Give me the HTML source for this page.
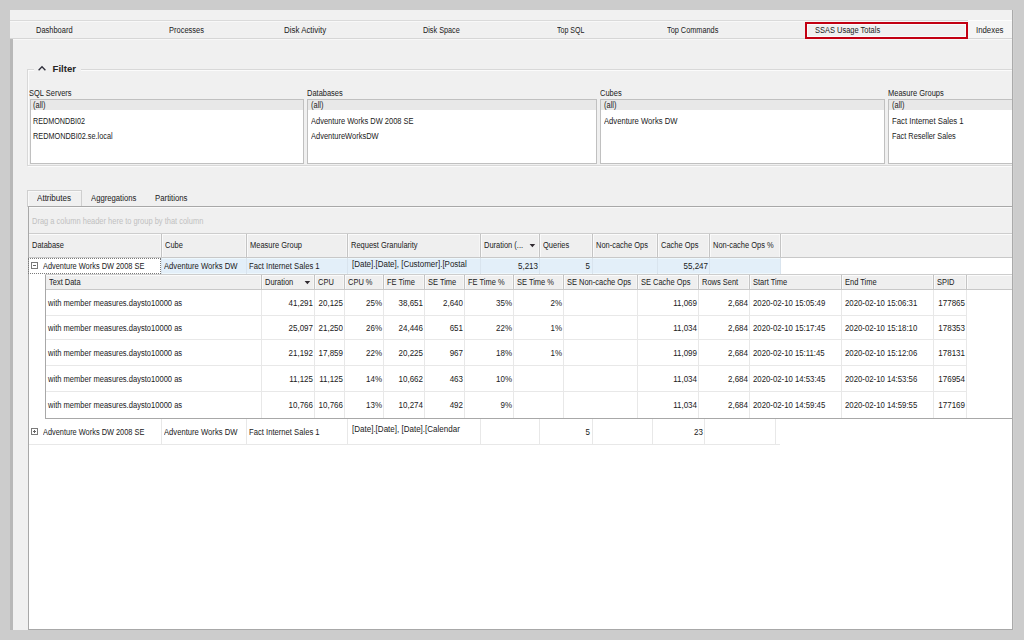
<!DOCTYPE html>
<html><head><meta charset="utf-8"><style>
html,body{margin:0;padding:0}
body{width:1024px;height:640px;overflow:hidden;position:relative;background:#cccccc;font-family:"Liberation Sans",sans-serif}
body>div,body>svg{position:absolute}
.t{white-space:nowrap}
</style></head><body>
<div style="left:10px;top:10px;width:1002px;height:620px;background:#f0f0f0"></div>
<div style="left:10px;top:38px;width:3px;height:592px;background:#b8b8b8"></div>
<div style="left:10px;top:10px;width:1002px;height:10px;background:#f1f1f1"></div>
<div style="left:10px;top:20px;width:1002px;height:1px;background:#dadada"></div>
<div style="left:10px;top:21px;width:1002px;height:1px;background:#f8f8f8"></div>
<div style="left:10px;top:38px;width:1002px;height:1px;background:#d6d6d6"></div>
<div style="left:13px;top:39px;width:999px;height:1px;background:#f8f8f8"></div>
<div style="left:968px;top:20px;width:44px;height:18px;background:#f5f5f5;border-top:1px solid #fdfdfd;box-sizing:border-box"></div>
<div class="t" style="left:35.5px;transform-origin:0 50%;transform:scaleX(0.88);top:24.05px;line-height:12px;font-size:8.5px;font-weight:normal;color:#1a1a1a;">Dashboard</div>
<div class="t" style="left:169.3px;transform-origin:0 50%;transform:scaleX(0.88);top:24.05px;line-height:12px;font-size:8.5px;font-weight:normal;color:#1a1a1a;">Processes</div>
<div class="t" style="left:284.3px;transform-origin:0 50%;transform:scaleX(0.93);top:24.05px;line-height:12px;font-size:8.5px;font-weight:normal;color:#1a1a1a;">Disk Activity</div>
<div class="t" style="left:422.8px;transform-origin:0 50%;transform:scaleX(0.856);top:24.05px;line-height:12px;font-size:8.5px;font-weight:normal;color:#1a1a1a;">Disk Space</div>
<div class="t" style="left:556.6px;transform-origin:0 50%;transform:scaleX(0.83);top:24.05px;line-height:12px;font-size:8.5px;font-weight:normal;color:#1a1a1a;">Top SQL</div>
<div class="t" style="left:666.6px;transform-origin:0 50%;transform:scaleX(0.863);top:24.05px;line-height:12px;font-size:8.5px;font-weight:normal;color:#1a1a1a;">Top Commands</div>
<div class="t" style="left:815px;transform-origin:0 50%;transform:scaleX(0.88);top:24.05px;line-height:12px;font-size:8.5px;font-weight:normal;color:#1a1a1a;">SSAS Usage Totals</div>
<div class="t" style="left:975.5px;transform-origin:0 50%;transform:scaleX(0.92);top:24.05px;line-height:12px;font-size:8.5px;font-weight:normal;color:#1a1a1a;">Indexes</div>
<div style="left:805px;top:22px;width:163px;height:17px;border:2px solid #c20012;box-sizing:border-box;box-shadow:inset 0 0 0 1px #fbfbfb"></div>
<div style="left:27px;top:69px;width:7px;height:1px;background:#d8d8d8"></div>
<div style="left:28px;top:70px;width:6px;height:1px;background:#fbfbfb"></div>
<div style="left:81px;top:69px;width:931px;height:1px;background:#d8d8d8"></div>
<div style="left:81px;top:70px;width:931px;height:1px;background:#fbfbfb"></div>
<div style="left:27px;top:69px;width:1px;height:97px;background:#d8d8d8"></div>
<div style="left:28px;top:70px;width:1px;height:95px;background:#fbfbfb"></div>
<div style="left:27px;top:165px;width:985px;height:1px;background:#d8d8d8"></div>
<div style="left:28px;top:166px;width:984px;height:1px;background:#fbfbfb"></div>
<svg style="left:37px;top:64px;width:10px;height:8px" viewBox="0 0 10 8"><path d="M1.6 6.3 L5 2.7 L8.4 6.3" fill="none" stroke="#2e2e3a" stroke-width="1.3"/></svg>
<div class="t" style="left:52.6px;transform-origin:0 50%;top:62.87px;line-height:12px;font-size:9.6px;font-weight:bold;color:#262626;">Filter</div>
<div class="t" style="left:29px;transform-origin:0 50%;transform:scaleX(0.88);top:87.05px;line-height:12px;font-size:8.5px;font-weight:normal;color:#1a1a1a;">SQL Servers</div>
<div style="left:30px;top:99px;width:274px;height:65px;background:#fff;border:1px solid #c0c0c0;box-sizing:border-box"></div>
<div style="left:31px;top:100px;width:272px;height:10px;background:#e8e8e8"></div>
<div class="t" style="left:33px;transform-origin:0 50%;transform:scaleX(0.88);top:98.65px;line-height:12px;font-size:8.5px;font-weight:normal;color:#1a1a1a;">(all)</div>
<div class="t" style="left:33px;transform-origin:0 50%;transform:scaleX(0.847);top:115.05px;line-height:12px;font-size:8.5px;font-weight:normal;color:#1a1a1a;">REDMONDBI02</div>
<div class="t" style="left:33px;transform-origin:0 50%;transform:scaleX(0.86);top:129.55px;line-height:12px;font-size:8.5px;font-weight:normal;color:#1a1a1a;">REDMONDBI02.se.local</div>
<div class="t" style="left:306.5px;transform-origin:0 50%;transform:scaleX(0.88);top:87.05px;line-height:12px;font-size:8.5px;font-weight:normal;color:#1a1a1a;">Databases</div>
<div style="left:307px;top:99px;width:290px;height:65px;background:#fff;border:1px solid #c0c0c0;box-sizing:border-box"></div>
<div style="left:308px;top:100px;width:288px;height:10px;background:#e8e8e8"></div>
<div class="t" style="left:310.5px;transform-origin:0 50%;transform:scaleX(0.88);top:98.65px;line-height:12px;font-size:8.5px;font-weight:normal;color:#1a1a1a;">(all)</div>
<div class="t" style="left:310.5px;transform-origin:0 50%;transform:scaleX(0.88);top:115.05px;line-height:12px;font-size:8.5px;font-weight:normal;color:#1a1a1a;">Adventure Works DW 2008 SE</div>
<div class="t" style="left:310.5px;transform-origin:0 50%;transform:scaleX(0.88);top:129.55px;line-height:12px;font-size:8.5px;font-weight:normal;color:#1a1a1a;">AdventureWorksDW</div>
<div class="t" style="left:599.5px;transform-origin:0 50%;transform:scaleX(0.88);top:87.05px;line-height:12px;font-size:8.5px;font-weight:normal;color:#1a1a1a;">Cubes</div>
<div style="left:600px;top:99px;width:285px;height:65px;background:#fff;border:1px solid #c0c0c0;box-sizing:border-box"></div>
<div style="left:601px;top:100px;width:283px;height:10px;background:#e8e8e8"></div>
<div class="t" style="left:603.5px;transform-origin:0 50%;transform:scaleX(0.88);top:98.65px;line-height:12px;font-size:8.5px;font-weight:normal;color:#1a1a1a;">(all)</div>
<div class="t" style="left:603.5px;transform-origin:0 50%;transform:scaleX(0.9);top:115.05px;line-height:12px;font-size:8.5px;font-weight:normal;color:#1a1a1a;">Adventure Works DW</div>
<div class="t" style="left:887.5px;transform-origin:0 50%;transform:scaleX(0.88);top:87.05px;line-height:12px;font-size:8.5px;font-weight:normal;color:#1a1a1a;">Measure Groups</div>
<div style="left:888px;top:99px;width:125px;height:65px;background:#fff;border:1px solid #c0c0c0;box-sizing:border-box"></div>
<div style="left:889px;top:100px;width:123px;height:10px;background:#e8e8e8"></div>
<div class="t" style="left:891.5px;transform-origin:0 50%;transform:scaleX(0.88);top:98.65px;line-height:12px;font-size:8.5px;font-weight:normal;color:#1a1a1a;">(all)</div>
<div class="t" style="left:891.5px;transform-origin:0 50%;transform:scaleX(0.913);top:115.05px;line-height:12px;font-size:8.5px;font-weight:normal;color:#1a1a1a;">Fact Internet Sales 1</div>
<div class="t" style="left:891.5px;transform-origin:0 50%;transform:scaleX(0.865);top:129.55px;line-height:12px;font-size:8.5px;font-weight:normal;color:#1a1a1a;">Fact Reseller Sales</div>
<div style="left:27px;top:190px;width:55px;height:17px;background:#f0f0f0;border:1px solid #cfcfcf;border-bottom:none;box-sizing:border-box;box-shadow:inset 1px 1px 0 #f8f8f8"></div>
<div class="t" style="left:37.3px;transform-origin:0 50%;transform:scaleX(0.95);top:192.05px;line-height:12px;font-size:8.5px;font-weight:normal;color:#1a1a1a;">Attributes</div>
<div class="t" style="left:90.5px;transform-origin:0 50%;transform:scaleX(0.905);top:192.05px;line-height:12px;font-size:8.5px;font-weight:normal;color:#1a1a1a;">Aggregations</div>
<div class="t" style="left:154.8px;transform-origin:0 50%;transform:scaleX(0.917);top:192.05px;line-height:12px;font-size:8.5px;font-weight:normal;color:#1a1a1a;">Partitions</div>
<div style="left:28px;top:206px;width:985px;height:424px;background:#fff;border:1px solid #a8a8a8;box-sizing:border-box"></div>
<div style="left:29px;top:207px;width:983px;height:26px;background:#f0f0f0;border-top:1px solid #fafafa;box-sizing:border-box"></div>
<div class="t" style="left:32px;transform-origin:0 50%;transform:scaleX(0.88);top:214.75px;line-height:12px;font-size:8.5px;font-weight:normal;color:#c0c0c0;">Drag a column header here to group by that column</div>
<div style="left:29px;top:233px;width:983px;height:1px;background:#cdcdcd"></div>
<div style="left:29px;top:234px;width:983px;height:23px;background:#efefef"></div>
<div style="left:29px;top:257px;width:983px;height:1px;background:#c8c8c8"></div>
<div style="left:29px;top:234px;width:983px;height:1px;background:#fbfbfb"></div>
<div style="left:160px;top:235px;width:1px;height:22px;background:#f6f6f6"></div>
<div style="left:161px;top:234px;width:1px;height:23px;background:#c4c4c4"></div>
<div style="left:162px;top:235px;width:1px;height:22px;background:#fafafa"></div>
<div style="left:245px;top:235px;width:1px;height:22px;background:#f6f6f6"></div>
<div style="left:246px;top:234px;width:1px;height:23px;background:#c4c4c4"></div>
<div style="left:247px;top:235px;width:1px;height:22px;background:#fafafa"></div>
<div style="left:346px;top:235px;width:1px;height:22px;background:#f6f6f6"></div>
<div style="left:347px;top:234px;width:1px;height:23px;background:#c4c4c4"></div>
<div style="left:348px;top:235px;width:1px;height:22px;background:#fafafa"></div>
<div style="left:479px;top:235px;width:1px;height:22px;background:#f6f6f6"></div>
<div style="left:480px;top:234px;width:1px;height:23px;background:#c4c4c4"></div>
<div style="left:481px;top:235px;width:1px;height:22px;background:#fafafa"></div>
<div style="left:538px;top:235px;width:1px;height:22px;background:#f6f6f6"></div>
<div style="left:539px;top:234px;width:1px;height:23px;background:#c4c4c4"></div>
<div style="left:540px;top:235px;width:1px;height:22px;background:#fafafa"></div>
<div style="left:591px;top:235px;width:1px;height:22px;background:#f6f6f6"></div>
<div style="left:592px;top:234px;width:1px;height:23px;background:#c4c4c4"></div>
<div style="left:593px;top:235px;width:1px;height:22px;background:#fafafa"></div>
<div style="left:656px;top:235px;width:1px;height:22px;background:#f6f6f6"></div>
<div style="left:657px;top:234px;width:1px;height:23px;background:#c4c4c4"></div>
<div style="left:658px;top:235px;width:1px;height:22px;background:#fafafa"></div>
<div style="left:708px;top:235px;width:1px;height:22px;background:#f6f6f6"></div>
<div style="left:709px;top:234px;width:1px;height:23px;background:#c4c4c4"></div>
<div style="left:710px;top:235px;width:1px;height:22px;background:#fafafa"></div>
<div style="left:779px;top:235px;width:1px;height:22px;background:#f6f6f6"></div>
<div style="left:780px;top:234px;width:1px;height:23px;background:#c4c4c4"></div>
<div style="left:781px;top:235px;width:1px;height:22px;background:#fafafa"></div>
<div class="t" style="left:32px;transform-origin:0 50%;transform:scaleX(0.88);top:238.55px;line-height:12px;font-size:8.5px;font-weight:normal;color:#1a1a1a;">Database</div>
<div class="t" style="left:165px;transform-origin:0 50%;transform:scaleX(0.88);top:238.55px;line-height:12px;font-size:8.5px;font-weight:normal;color:#1a1a1a;">Cube</div>
<div class="t" style="left:250px;transform-origin:0 50%;transform:scaleX(0.88);top:238.55px;line-height:12px;font-size:8.5px;font-weight:normal;color:#1a1a1a;">Measure Group</div>
<div class="t" style="left:351px;transform-origin:0 50%;transform:scaleX(0.88);top:238.55px;line-height:12px;font-size:8.5px;font-weight:normal;color:#1a1a1a;">Request Granularity</div>
<div class="t" style="left:484px;transform-origin:0 50%;transform:scaleX(0.88);top:238.55px;line-height:12px;font-size:8.5px;font-weight:normal;color:#1a1a1a;">Duration (...</div>
<div class="t" style="left:543px;transform-origin:0 50%;transform:scaleX(0.88);top:238.55px;line-height:12px;font-size:8.5px;font-weight:normal;color:#1a1a1a;">Queries</div>
<div class="t" style="left:596px;transform-origin:0 50%;transform:scaleX(0.88);top:238.55px;line-height:12px;font-size:8.5px;font-weight:normal;color:#1a1a1a;">Non-cache Ops</div>
<div class="t" style="left:661px;transform-origin:0 50%;transform:scaleX(0.88);top:238.55px;line-height:12px;font-size:8.5px;font-weight:normal;color:#1a1a1a;">Cache Ops</div>
<div class="t" style="left:713px;transform-origin:0 50%;transform:scaleX(0.88);top:238.55px;line-height:12px;font-size:8.5px;font-weight:normal;color:#1a1a1a;">Non-cache Ops %</div>
<svg style="left:529px;top:243px;width:8px;height:6px" viewBox="0 0 8 6"><path d="M0.6 1 L6.2 1 L3.4 4.3 Z" fill="#302a30"/></svg>
<div style="left:161px;top:258px;width:619px;height:16px;background:#e3eff9;box-shadow:inset 0 1px 0 #eef8fd, inset 0 -1px 0 #eef8fd"></div>
<div style="left:161px;top:258px;width:1px;height:16px;background:#d9e4ee"></div>
<div style="left:246px;top:258px;width:1px;height:16px;background:#d9e4ee"></div>
<div style="left:347px;top:258px;width:1px;height:16px;background:#d9e4ee"></div>
<div style="left:480px;top:258px;width:1px;height:16px;background:#d9e4ee"></div>
<div style="left:539px;top:258px;width:1px;height:16px;background:#d9e4ee"></div>
<div style="left:592px;top:258px;width:1px;height:16px;background:#d9e4ee"></div>
<div style="left:657px;top:258px;width:1px;height:16px;background:#d9e4ee"></div>
<div style="left:709px;top:258px;width:1px;height:16px;background:#d9e4ee"></div>
<div style="left:780px;top:258px;width:1px;height:16px;background:#d9e4ee"></div>
<div style="left:28px;top:258px;width:133px;height:16px;border:1px dotted #7a7a7a;box-sizing:border-box"></div>
<svg style="left:31px;top:262px;width:7px;height:7px" viewBox="0 0 7 7"><rect x="0.5" y="0.5" width="6" height="6" fill="#fff" stroke="#7a7a7a" stroke-width="1"/><path d="M2 3.5 H5" stroke="#666" stroke-width="1"/></svg>
<div class="t" style="left:42.5px;transform-origin:0 50%;transform:scaleX(0.87);top:259.65px;line-height:12px;font-size:8.5px;font-weight:normal;color:#1a1a1a;">Adventure Works DW 2008 SE</div>
<div class="t" style="left:164px;transform-origin:0 50%;transform:scaleX(0.9);top:259.65px;line-height:12px;font-size:8.5px;font-weight:normal;color:#1a1a1a;">Adventure Works DW</div>
<div class="t" style="left:249.3px;transform-origin:0 50%;transform:scaleX(0.9);top:259.65px;line-height:12px;font-size:8.5px;font-weight:normal;color:#1a1a1a;">Fact Internet Sales 1</div>
<div class="t" style="left:351.5px;transform-origin:0 50%;transform:scaleX(0.938);top:258.15px;line-height:12px;font-size:8.5px;font-weight:normal;color:#1a1a1a;">[Date].[Date], [Customer].[Postal</div>
<div class="t" style="left:237.5px;width:300px;text-align:right;transform-origin:100% 50%;transform:scaleX(0.94);top:259.65px;line-height:12px;font-size:8.5px;font-weight:normal;color:#1a1a1a;">5,213</div>
<div class="t" style="left:290px;width:300px;text-align:right;transform-origin:100% 50%;transform:scaleX(0.94);top:259.65px;line-height:12px;font-size:8.5px;font-weight:normal;color:#1a1a1a;">5</div>
<div class="t" style="left:407.5px;width:300px;text-align:right;transform-origin:100% 50%;transform:scaleX(0.94);top:259.65px;line-height:12px;font-size:8.5px;font-weight:normal;color:#1a1a1a;">55,247</div>
<div style="left:45px;top:274px;width:1px;height:145px;background:#a8a8a8"></div>
<div style="left:45px;top:274px;width:967px;height:1px;background:#cdcdcd"></div>
<div style="left:46px;top:275px;width:966px;height:14px;background:#efefef"></div>
<div style="left:46px;top:289px;width:966px;height:1px;background:#c8c8c8"></div>
<div style="left:46px;top:275px;width:966px;height:1px;background:#fbfbfb"></div>
<div style="left:260px;top:276px;width:1px;height:13px;background:#f6f6f6"></div>
<div style="left:261px;top:275px;width:1px;height:14px;background:#c4c4c4"></div>
<div style="left:262px;top:276px;width:1px;height:13px;background:#fafafa"></div>
<div style="left:313px;top:276px;width:1px;height:13px;background:#f6f6f6"></div>
<div style="left:314px;top:275px;width:1px;height:14px;background:#c4c4c4"></div>
<div style="left:315px;top:276px;width:1px;height:13px;background:#fafafa"></div>
<div style="left:343px;top:276px;width:1px;height:13px;background:#f6f6f6"></div>
<div style="left:344px;top:275px;width:1px;height:14px;background:#c4c4c4"></div>
<div style="left:345px;top:276px;width:1px;height:13px;background:#fafafa"></div>
<div style="left:382px;top:276px;width:1px;height:13px;background:#f6f6f6"></div>
<div style="left:383px;top:275px;width:1px;height:14px;background:#c4c4c4"></div>
<div style="left:384px;top:276px;width:1px;height:13px;background:#fafafa"></div>
<div style="left:423px;top:276px;width:1px;height:13px;background:#f6f6f6"></div>
<div style="left:424px;top:275px;width:1px;height:14px;background:#c4c4c4"></div>
<div style="left:425px;top:276px;width:1px;height:13px;background:#fafafa"></div>
<div style="left:463px;top:276px;width:1px;height:13px;background:#f6f6f6"></div>
<div style="left:464px;top:275px;width:1px;height:14px;background:#c4c4c4"></div>
<div style="left:465px;top:276px;width:1px;height:13px;background:#fafafa"></div>
<div style="left:512px;top:276px;width:1px;height:13px;background:#f6f6f6"></div>
<div style="left:513px;top:275px;width:1px;height:14px;background:#c4c4c4"></div>
<div style="left:514px;top:276px;width:1px;height:13px;background:#fafafa"></div>
<div style="left:562px;top:276px;width:1px;height:13px;background:#f6f6f6"></div>
<div style="left:563px;top:275px;width:1px;height:14px;background:#c4c4c4"></div>
<div style="left:564px;top:276px;width:1px;height:13px;background:#fafafa"></div>
<div style="left:636px;top:276px;width:1px;height:13px;background:#f6f6f6"></div>
<div style="left:637px;top:275px;width:1px;height:14px;background:#c4c4c4"></div>
<div style="left:638px;top:276px;width:1px;height:13px;background:#fafafa"></div>
<div style="left:697px;top:276px;width:1px;height:13px;background:#f6f6f6"></div>
<div style="left:698px;top:275px;width:1px;height:14px;background:#c4c4c4"></div>
<div style="left:699px;top:276px;width:1px;height:13px;background:#fafafa"></div>
<div style="left:748px;top:276px;width:1px;height:13px;background:#f6f6f6"></div>
<div style="left:749px;top:275px;width:1px;height:14px;background:#c4c4c4"></div>
<div style="left:750px;top:276px;width:1px;height:13px;background:#fafafa"></div>
<div style="left:840px;top:276px;width:1px;height:13px;background:#f6f6f6"></div>
<div style="left:841px;top:275px;width:1px;height:14px;background:#c4c4c4"></div>
<div style="left:842px;top:276px;width:1px;height:13px;background:#fafafa"></div>
<div style="left:932px;top:276px;width:1px;height:13px;background:#f6f6f6"></div>
<div style="left:933px;top:275px;width:1px;height:14px;background:#c4c4c4"></div>
<div style="left:934px;top:276px;width:1px;height:13px;background:#fafafa"></div>
<div style="left:965px;top:276px;width:1px;height:13px;background:#f6f6f6"></div>
<div style="left:966px;top:275px;width:1px;height:14px;background:#c4c4c4"></div>
<div style="left:967px;top:276px;width:1px;height:13px;background:#fafafa"></div>
<div class="t" style="left:49px;transform-origin:0 50%;transform:scaleX(0.88);top:275.65px;line-height:12px;font-size:8.5px;font-weight:normal;color:#1a1a1a;">Text Data</div>
<div class="t" style="left:265px;transform-origin:0 50%;transform:scaleX(0.88);top:275.65px;line-height:12px;font-size:8.5px;font-weight:normal;color:#1a1a1a;">Duration</div>
<div class="t" style="left:318px;transform-origin:0 50%;transform:scaleX(0.88);top:275.65px;line-height:12px;font-size:8.5px;font-weight:normal;color:#1a1a1a;">CPU</div>
<div class="t" style="left:348px;transform-origin:0 50%;transform:scaleX(0.88);top:275.65px;line-height:12px;font-size:8.5px;font-weight:normal;color:#1a1a1a;">CPU %</div>
<div class="t" style="left:387px;transform-origin:0 50%;transform:scaleX(0.88);top:275.65px;line-height:12px;font-size:8.5px;font-weight:normal;color:#1a1a1a;">FE Time</div>
<div class="t" style="left:428px;transform-origin:0 50%;transform:scaleX(0.88);top:275.65px;line-height:12px;font-size:8.5px;font-weight:normal;color:#1a1a1a;">SE Time</div>
<div class="t" style="left:468px;transform-origin:0 50%;transform:scaleX(0.88);top:275.65px;line-height:12px;font-size:8.5px;font-weight:normal;color:#1a1a1a;">FE Time %</div>
<div class="t" style="left:517px;transform-origin:0 50%;transform:scaleX(0.88);top:275.65px;line-height:12px;font-size:8.5px;font-weight:normal;color:#1a1a1a;">SE Time %</div>
<div class="t" style="left:567px;transform-origin:0 50%;transform:scaleX(0.88);top:275.65px;line-height:12px;font-size:8.5px;font-weight:normal;color:#1a1a1a;">SE Non-cache Ops</div>
<div class="t" style="left:641px;transform-origin:0 50%;transform:scaleX(0.88);top:275.65px;line-height:12px;font-size:8.5px;font-weight:normal;color:#1a1a1a;">SE Cache Ops</div>
<div class="t" style="left:702px;transform-origin:0 50%;transform:scaleX(0.88);top:275.65px;line-height:12px;font-size:8.5px;font-weight:normal;color:#1a1a1a;">Rows Sent</div>
<div class="t" style="left:753px;transform-origin:0 50%;transform:scaleX(0.88);top:275.65px;line-height:12px;font-size:8.5px;font-weight:normal;color:#1a1a1a;">Start Time</div>
<div class="t" style="left:845px;transform-origin:0 50%;transform:scaleX(0.88);top:275.65px;line-height:12px;font-size:8.5px;font-weight:normal;color:#1a1a1a;">End Time</div>
<div class="t" style="left:937px;transform-origin:0 50%;transform:scaleX(0.88);top:275.65px;line-height:12px;font-size:8.5px;font-weight:normal;color:#1a1a1a;">SPID</div>
<svg style="left:304px;top:280px;width:8px;height:6px" viewBox="0 0 8 6"><path d="M0.6 1 L6.2 1 L3.4 4.3 Z" fill="#302a30"/></svg>
<div class="t" style="left:48px;transform-origin:0 50%;transform:scaleX(0.89);top:297.25px;line-height:12px;font-size:8.5px;font-weight:normal;color:#1a1a1a;">with member measures.daysto10000 as</div>
<div class="t" style="left:12.5px;width:300px;text-align:right;transform-origin:100% 50%;transform:scaleX(0.94);top:297.25px;line-height:12px;font-size:8.5px;font-weight:normal;color:#1a1a1a;">41,291</div>
<div class="t" style="left:42.5px;width:300px;text-align:right;transform-origin:100% 50%;transform:scaleX(0.94);top:297.25px;line-height:12px;font-size:8.5px;font-weight:normal;color:#1a1a1a;">20,125</div>
<div class="t" style="left:81.5px;width:300px;text-align:right;transform-origin:100% 50%;transform:scaleX(0.94);top:297.25px;line-height:12px;font-size:8.5px;font-weight:normal;color:#1a1a1a;">25%</div>
<div class="t" style="left:122.5px;width:300px;text-align:right;transform-origin:100% 50%;transform:scaleX(0.94);top:297.25px;line-height:12px;font-size:8.5px;font-weight:normal;color:#1a1a1a;">38,651</div>
<div class="t" style="left:162.5px;width:300px;text-align:right;transform-origin:100% 50%;transform:scaleX(0.94);top:297.25px;line-height:12px;font-size:8.5px;font-weight:normal;color:#1a1a1a;">2,640</div>
<div class="t" style="left:211.5px;width:300px;text-align:right;transform-origin:100% 50%;transform:scaleX(0.94);top:297.25px;line-height:12px;font-size:8.5px;font-weight:normal;color:#1a1a1a;">35%</div>
<div class="t" style="left:261.5px;width:300px;text-align:right;transform-origin:100% 50%;transform:scaleX(0.94);top:297.25px;line-height:12px;font-size:8.5px;font-weight:normal;color:#1a1a1a;">2%</div>
<div class="t" style="left:396.5px;width:300px;text-align:right;transform-origin:100% 50%;transform:scaleX(0.94);top:297.25px;line-height:12px;font-size:8.5px;font-weight:normal;color:#1a1a1a;">11,069</div>
<div class="t" style="left:447.5px;width:300px;text-align:right;transform-origin:100% 50%;transform:scaleX(0.94);top:297.25px;line-height:12px;font-size:8.5px;font-weight:normal;color:#1a1a1a;">2,684</div>
<div class="t" style="left:752.5px;transform-origin:0 50%;transform:scaleX(0.915);top:297.25px;line-height:12px;font-size:8.5px;font-weight:normal;color:#1a1a1a;">2020-02-10 15:05:49</div>
<div class="t" style="left:844.5px;transform-origin:0 50%;transform:scaleX(0.915);top:297.25px;line-height:12px;font-size:8.5px;font-weight:normal;color:#1a1a1a;">2020-02-10 15:06:31</div>
<div class="t" style="left:664.5px;width:300px;text-align:right;transform-origin:100% 50%;transform:scaleX(0.94);top:297.25px;line-height:12px;font-size:8.5px;font-weight:normal;color:#1a1a1a;">177865</div>
<div class="t" style="left:48px;transform-origin:0 50%;transform:scaleX(0.89);top:321.65px;line-height:12px;font-size:8.5px;font-weight:normal;color:#1a1a1a;">with member measures.daysto10000 as</div>
<div class="t" style="left:12.5px;width:300px;text-align:right;transform-origin:100% 50%;transform:scaleX(0.94);top:321.65px;line-height:12px;font-size:8.5px;font-weight:normal;color:#1a1a1a;">25,097</div>
<div class="t" style="left:42.5px;width:300px;text-align:right;transform-origin:100% 50%;transform:scaleX(0.94);top:321.65px;line-height:12px;font-size:8.5px;font-weight:normal;color:#1a1a1a;">21,250</div>
<div class="t" style="left:81.5px;width:300px;text-align:right;transform-origin:100% 50%;transform:scaleX(0.94);top:321.65px;line-height:12px;font-size:8.5px;font-weight:normal;color:#1a1a1a;">26%</div>
<div class="t" style="left:122.5px;width:300px;text-align:right;transform-origin:100% 50%;transform:scaleX(0.94);top:321.65px;line-height:12px;font-size:8.5px;font-weight:normal;color:#1a1a1a;">24,446</div>
<div class="t" style="left:162.5px;width:300px;text-align:right;transform-origin:100% 50%;transform:scaleX(0.94);top:321.65px;line-height:12px;font-size:8.5px;font-weight:normal;color:#1a1a1a;">651</div>
<div class="t" style="left:211.5px;width:300px;text-align:right;transform-origin:100% 50%;transform:scaleX(0.94);top:321.65px;line-height:12px;font-size:8.5px;font-weight:normal;color:#1a1a1a;">22%</div>
<div class="t" style="left:261.5px;width:300px;text-align:right;transform-origin:100% 50%;transform:scaleX(0.94);top:321.65px;line-height:12px;font-size:8.5px;font-weight:normal;color:#1a1a1a;">1%</div>
<div class="t" style="left:396.5px;width:300px;text-align:right;transform-origin:100% 50%;transform:scaleX(0.94);top:321.65px;line-height:12px;font-size:8.5px;font-weight:normal;color:#1a1a1a;">11,034</div>
<div class="t" style="left:447.5px;width:300px;text-align:right;transform-origin:100% 50%;transform:scaleX(0.94);top:321.65px;line-height:12px;font-size:8.5px;font-weight:normal;color:#1a1a1a;">2,684</div>
<div class="t" style="left:752.5px;transform-origin:0 50%;transform:scaleX(0.915);top:321.65px;line-height:12px;font-size:8.5px;font-weight:normal;color:#1a1a1a;">2020-02-10 15:17:45</div>
<div class="t" style="left:844.5px;transform-origin:0 50%;transform:scaleX(0.915);top:321.65px;line-height:12px;font-size:8.5px;font-weight:normal;color:#1a1a1a;">2020-02-10 15:18:10</div>
<div class="t" style="left:664.5px;width:300px;text-align:right;transform-origin:100% 50%;transform:scaleX(0.94);top:321.65px;line-height:12px;font-size:8.5px;font-weight:normal;color:#1a1a1a;">178353</div>
<div class="t" style="left:48px;transform-origin:0 50%;transform:scaleX(0.89);top:347.45px;line-height:12px;font-size:8.5px;font-weight:normal;color:#1a1a1a;">with member measures.daysto10000 as</div>
<div class="t" style="left:12.5px;width:300px;text-align:right;transform-origin:100% 50%;transform:scaleX(0.94);top:347.45px;line-height:12px;font-size:8.5px;font-weight:normal;color:#1a1a1a;">21,192</div>
<div class="t" style="left:42.5px;width:300px;text-align:right;transform-origin:100% 50%;transform:scaleX(0.94);top:347.45px;line-height:12px;font-size:8.5px;font-weight:normal;color:#1a1a1a;">17,859</div>
<div class="t" style="left:81.5px;width:300px;text-align:right;transform-origin:100% 50%;transform:scaleX(0.94);top:347.45px;line-height:12px;font-size:8.5px;font-weight:normal;color:#1a1a1a;">22%</div>
<div class="t" style="left:122.5px;width:300px;text-align:right;transform-origin:100% 50%;transform:scaleX(0.94);top:347.45px;line-height:12px;font-size:8.5px;font-weight:normal;color:#1a1a1a;">20,225</div>
<div class="t" style="left:162.5px;width:300px;text-align:right;transform-origin:100% 50%;transform:scaleX(0.94);top:347.45px;line-height:12px;font-size:8.5px;font-weight:normal;color:#1a1a1a;">967</div>
<div class="t" style="left:211.5px;width:300px;text-align:right;transform-origin:100% 50%;transform:scaleX(0.94);top:347.45px;line-height:12px;font-size:8.5px;font-weight:normal;color:#1a1a1a;">18%</div>
<div class="t" style="left:261.5px;width:300px;text-align:right;transform-origin:100% 50%;transform:scaleX(0.94);top:347.45px;line-height:12px;font-size:8.5px;font-weight:normal;color:#1a1a1a;">1%</div>
<div class="t" style="left:396.5px;width:300px;text-align:right;transform-origin:100% 50%;transform:scaleX(0.94);top:347.45px;line-height:12px;font-size:8.5px;font-weight:normal;color:#1a1a1a;">11,099</div>
<div class="t" style="left:447.5px;width:300px;text-align:right;transform-origin:100% 50%;transform:scaleX(0.94);top:347.45px;line-height:12px;font-size:8.5px;font-weight:normal;color:#1a1a1a;">2,684</div>
<div class="t" style="left:752.5px;transform-origin:0 50%;transform:scaleX(0.915);top:347.45px;line-height:12px;font-size:8.5px;font-weight:normal;color:#1a1a1a;">2020-02-10 15:11:45</div>
<div class="t" style="left:844.5px;transform-origin:0 50%;transform:scaleX(0.915);top:347.45px;line-height:12px;font-size:8.5px;font-weight:normal;color:#1a1a1a;">2020-02-10 15:12:06</div>
<div class="t" style="left:664.5px;width:300px;text-align:right;transform-origin:100% 50%;transform:scaleX(0.94);top:347.45px;line-height:12px;font-size:8.5px;font-weight:normal;color:#1a1a1a;">178131</div>
<div class="t" style="left:48px;transform-origin:0 50%;transform:scaleX(0.89);top:373.05px;line-height:12px;font-size:8.5px;font-weight:normal;color:#1a1a1a;">with member measures.daysto10000 as</div>
<div class="t" style="left:12.5px;width:300px;text-align:right;transform-origin:100% 50%;transform:scaleX(0.94);top:373.05px;line-height:12px;font-size:8.5px;font-weight:normal;color:#1a1a1a;">11,125</div>
<div class="t" style="left:42.5px;width:300px;text-align:right;transform-origin:100% 50%;transform:scaleX(0.94);top:373.05px;line-height:12px;font-size:8.5px;font-weight:normal;color:#1a1a1a;">11,125</div>
<div class="t" style="left:81.5px;width:300px;text-align:right;transform-origin:100% 50%;transform:scaleX(0.94);top:373.05px;line-height:12px;font-size:8.5px;font-weight:normal;color:#1a1a1a;">14%</div>
<div class="t" style="left:122.5px;width:300px;text-align:right;transform-origin:100% 50%;transform:scaleX(0.94);top:373.05px;line-height:12px;font-size:8.5px;font-weight:normal;color:#1a1a1a;">10,662</div>
<div class="t" style="left:162.5px;width:300px;text-align:right;transform-origin:100% 50%;transform:scaleX(0.94);top:373.05px;line-height:12px;font-size:8.5px;font-weight:normal;color:#1a1a1a;">463</div>
<div class="t" style="left:211.5px;width:300px;text-align:right;transform-origin:100% 50%;transform:scaleX(0.94);top:373.05px;line-height:12px;font-size:8.5px;font-weight:normal;color:#1a1a1a;">10%</div>
<div class="t" style="left:396.5px;width:300px;text-align:right;transform-origin:100% 50%;transform:scaleX(0.94);top:373.05px;line-height:12px;font-size:8.5px;font-weight:normal;color:#1a1a1a;">11,034</div>
<div class="t" style="left:447.5px;width:300px;text-align:right;transform-origin:100% 50%;transform:scaleX(0.94);top:373.05px;line-height:12px;font-size:8.5px;font-weight:normal;color:#1a1a1a;">2,684</div>
<div class="t" style="left:752.5px;transform-origin:0 50%;transform:scaleX(0.915);top:373.05px;line-height:12px;font-size:8.5px;font-weight:normal;color:#1a1a1a;">2020-02-10 14:53:45</div>
<div class="t" style="left:844.5px;transform-origin:0 50%;transform:scaleX(0.915);top:373.05px;line-height:12px;font-size:8.5px;font-weight:normal;color:#1a1a1a;">2020-02-10 14:53:56</div>
<div class="t" style="left:664.5px;width:300px;text-align:right;transform-origin:100% 50%;transform:scaleX(0.94);top:373.05px;line-height:12px;font-size:8.5px;font-weight:normal;color:#1a1a1a;">176954</div>
<div class="t" style="left:48px;transform-origin:0 50%;transform:scaleX(0.89);top:398.65px;line-height:12px;font-size:8.5px;font-weight:normal;color:#1a1a1a;">with member measures.daysto10000 as</div>
<div class="t" style="left:12.5px;width:300px;text-align:right;transform-origin:100% 50%;transform:scaleX(0.94);top:398.65px;line-height:12px;font-size:8.5px;font-weight:normal;color:#1a1a1a;">10,766</div>
<div class="t" style="left:42.5px;width:300px;text-align:right;transform-origin:100% 50%;transform:scaleX(0.94);top:398.65px;line-height:12px;font-size:8.5px;font-weight:normal;color:#1a1a1a;">10,766</div>
<div class="t" style="left:81.5px;width:300px;text-align:right;transform-origin:100% 50%;transform:scaleX(0.94);top:398.65px;line-height:12px;font-size:8.5px;font-weight:normal;color:#1a1a1a;">13%</div>
<div class="t" style="left:122.5px;width:300px;text-align:right;transform-origin:100% 50%;transform:scaleX(0.94);top:398.65px;line-height:12px;font-size:8.5px;font-weight:normal;color:#1a1a1a;">10,274</div>
<div class="t" style="left:162.5px;width:300px;text-align:right;transform-origin:100% 50%;transform:scaleX(0.94);top:398.65px;line-height:12px;font-size:8.5px;font-weight:normal;color:#1a1a1a;">492</div>
<div class="t" style="left:211.5px;width:300px;text-align:right;transform-origin:100% 50%;transform:scaleX(0.94);top:398.65px;line-height:12px;font-size:8.5px;font-weight:normal;color:#1a1a1a;">9%</div>
<div class="t" style="left:396.5px;width:300px;text-align:right;transform-origin:100% 50%;transform:scaleX(0.94);top:398.65px;line-height:12px;font-size:8.5px;font-weight:normal;color:#1a1a1a;">11,034</div>
<div class="t" style="left:447.5px;width:300px;text-align:right;transform-origin:100% 50%;transform:scaleX(0.94);top:398.65px;line-height:12px;font-size:8.5px;font-weight:normal;color:#1a1a1a;">2,684</div>
<div class="t" style="left:752.5px;transform-origin:0 50%;transform:scaleX(0.915);top:398.65px;line-height:12px;font-size:8.5px;font-weight:normal;color:#1a1a1a;">2020-02-10 14:59:45</div>
<div class="t" style="left:844.5px;transform-origin:0 50%;transform:scaleX(0.915);top:398.65px;line-height:12px;font-size:8.5px;font-weight:normal;color:#1a1a1a;">2020-02-10 14:59:55</div>
<div class="t" style="left:664.5px;width:300px;text-align:right;transform-origin:100% 50%;transform:scaleX(0.94);top:398.65px;line-height:12px;font-size:8.5px;font-weight:normal;color:#1a1a1a;">177169</div>
<div style="left:46px;top:315px;width:920px;height:1px;background:#e8e8e8"></div>
<div style="left:46px;top:339px;width:920px;height:1px;background:#e8e8e8"></div>
<div style="left:46px;top:365px;width:920px;height:1px;background:#e8e8e8"></div>
<div style="left:46px;top:391px;width:920px;height:1px;background:#e8e8e8"></div>
<div style="left:261px;top:290px;width:1px;height:128px;background:#e8e8e8"></div>
<div style="left:314px;top:290px;width:1px;height:128px;background:#e8e8e8"></div>
<div style="left:344px;top:290px;width:1px;height:128px;background:#e8e8e8"></div>
<div style="left:383px;top:290px;width:1px;height:128px;background:#e8e8e8"></div>
<div style="left:424px;top:290px;width:1px;height:128px;background:#e8e8e8"></div>
<div style="left:464px;top:290px;width:1px;height:128px;background:#e8e8e8"></div>
<div style="left:513px;top:290px;width:1px;height:128px;background:#e8e8e8"></div>
<div style="left:563px;top:290px;width:1px;height:128px;background:#e8e8e8"></div>
<div style="left:637px;top:290px;width:1px;height:128px;background:#e8e8e8"></div>
<div style="left:698px;top:290px;width:1px;height:128px;background:#e8e8e8"></div>
<div style="left:749px;top:290px;width:1px;height:128px;background:#e8e8e8"></div>
<div style="left:841px;top:290px;width:1px;height:128px;background:#e8e8e8"></div>
<div style="left:933px;top:290px;width:1px;height:128px;background:#e8e8e8"></div>
<div style="left:966px;top:290px;width:1px;height:128px;background:#e8e8e8"></div>
<div style="left:45px;top:418px;width:967px;height:1px;background:#a8a8a8"></div>
<div style="left:29px;top:444px;width:751px;height:1px;background:#e8e8e8"></div>
<div style="left:161px;top:419px;width:1px;height:25px;background:#e8e8e8"></div>
<div style="left:246px;top:419px;width:1px;height:25px;background:#e8e8e8"></div>
<div style="left:347px;top:419px;width:1px;height:25px;background:#e8e8e8"></div>
<div style="left:480px;top:419px;width:1px;height:25px;background:#e8e8e8"></div>
<div style="left:539px;top:419px;width:1px;height:25px;background:#e8e8e8"></div>
<div style="left:592px;top:419px;width:1px;height:25px;background:#e8e8e8"></div>
<div style="left:652px;top:419px;width:1px;height:25px;background:#e8e8e8"></div>
<div style="left:704px;top:419px;width:1px;height:25px;background:#e8e8e8"></div>
<div style="left:775px;top:419px;width:1px;height:25px;background:#e8e8e8"></div>
<svg style="left:31px;top:428px;width:7px;height:7px" viewBox="0 0 7 7"><rect x="0.5" y="0.5" width="6" height="6" fill="#fff" stroke="#7a7a7a" stroke-width="1"/><path d="M2 3.5 H5" stroke="#666" stroke-width="1"/><path d="M3.5 2 V5" stroke="#666" stroke-width="1"/></svg>
<div class="t" style="left:42.5px;transform-origin:0 50%;transform:scaleX(0.87);top:426.05px;line-height:12px;font-size:8.5px;font-weight:normal;color:#1a1a1a;">Adventure Works DW 2008 SE</div>
<div class="t" style="left:164px;transform-origin:0 50%;transform:scaleX(0.9);top:426.05px;line-height:12px;font-size:8.5px;font-weight:normal;color:#1a1a1a;">Adventure Works DW</div>
<div class="t" style="left:249.3px;transform-origin:0 50%;transform:scaleX(0.9);top:426.05px;line-height:12px;font-size:8.5px;font-weight:normal;color:#1a1a1a;">Fact Internet Sales 1</div>
<div class="t" style="left:351.5px;transform-origin:0 50%;transform:scaleX(0.943);top:423.45px;line-height:12px;font-size:8.5px;font-weight:normal;color:#1a1a1a;">[Date].[Date], [Date].[Calendar</div>
<div class="t" style="left:290px;width:300px;text-align:right;transform-origin:100% 50%;transform:scaleX(0.94);top:426.05px;line-height:12px;font-size:8.5px;font-weight:normal;color:#1a1a1a;">5</div>
<div class="t" style="left:402.5px;width:300px;text-align:right;transform-origin:100% 50%;transform:scaleX(0.94);top:426.05px;line-height:12px;font-size:8.5px;font-weight:normal;color:#1a1a1a;">23</div>
<div style="left:1012px;top:10px;width:1px;height:620px;background:#aaaaaa"></div>
<div style="left:1013px;top:10px;width:1px;height:620px;background:#d0d0d0"></div>
</body></html>
